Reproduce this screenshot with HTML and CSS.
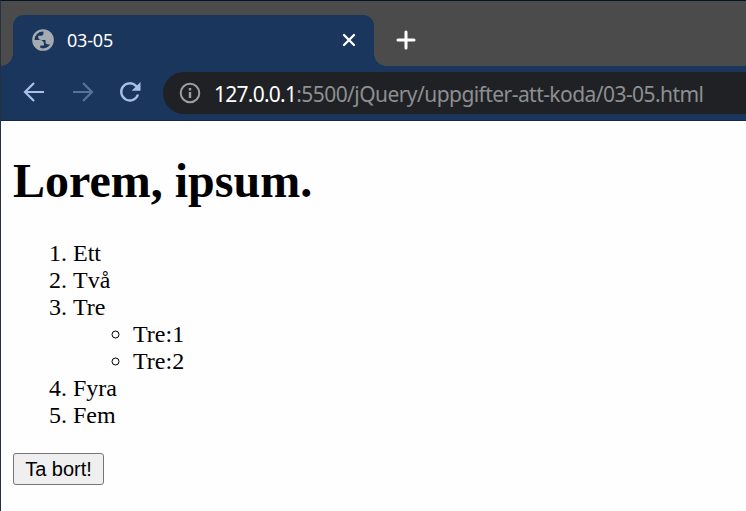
FILE: index.html
```html
<!DOCTYPE html>
<html lang="sv">
<head>
<meta charset="utf-8">
<title>03-05</title>
<link rel="stylesheet" href="styles.css">
</head>
<body>
<div class="window">
  <header class="tabs">
    <div class="tab">
      <svg class="globe" width="26" height="26" viewBox="0 0 24 24"><circle cx="12" cy="12" r="8.900" fill="none" stroke="#a5abb1" stroke-width="2.200"/><path fill="#a5abb1" d="M3.500 12h4.900c3.400.02 4.900 1.730 4.500 5.100H9.500v3C6 18.800 3.500 15.600 3.500 12zm17 0c0 1-.3 2-.9 2.900-.9 1.100-2.200 1.500-3.600 1.100-1.100-.4-1.700-1.200-1.700-2.400V12h-4c-1.800-.1-2.700-1-2.700-2.700V8h2.700c1.400 0 2.100-.7 2.100-2V3.600c4.500-.1 8.100 3.800 8.100 8.400z"/></svg>
      <span class="title">03-05</span>
      <svg class="close" width="14" height="14" viewBox="0 0 14 14"><path d="M2 2l10 10M12 2L2 12" stroke="#fff" stroke-width="2.300" stroke-linecap="round"/></svg>
    </div>
    <svg class="plus" width="20" height="20" viewBox="0 0 20 20"><path d="M10 2v16M2 10h16" stroke="#fff" stroke-width="3" stroke-linecap="round"/></svg>
  </header>
  <nav class="toolbar">
    <svg class="back" width="22" height="22" viewBox="0 0 22 22"><path d="M21 11H2.500M11 2L2 11l9 9" fill="none" stroke="#a9c1e6" stroke-width="2.200"/></svg>
    <svg class="forward" width="22" height="22" viewBox="0 0 22 22"><path d="M1 11h18.500M11 2l9 9-9 9" fill="none" stroke="#56739c" stroke-width="2.200"/></svg>
    <svg class="reload" width="22" height="22" viewBox="0 0 22 22"><path d="M19 13.500A8.600 8.600 0 1 1 17 4.900l2 2" fill="none" stroke="#a9c1e6" stroke-width="2.300"/><path d="M21.500 1v8.800h-8.800z" fill="#a9c1e6"/></svg>
    <div class="address">
      <svg width="22" height="22" viewBox="0 0 22 22"><circle cx="11" cy="11" r="9.300" fill="none" stroke="#9aa0a6" stroke-width="2"/><path d="M9.800 10h2.400v6H9.800zM9.800 6h2.400v2.400H9.800z" fill="#9aa0a6"/></svg>
      <span class="url"><span class="host">127.0.0.1</span>:5500/jQuery/uppgifter-att-koda/03-05.html</span>
    </div>
  </nav>
  <main>
    <h1>Lorem, ipsum.</h1>
    <ol>
      <li>Ett</li>
      <li>Två</li>
      <li>Tre
        <ul>
          <li>Tre:1</li>
          <li>Tre:2</li>
        </ul>
      </li>
      <li>Fyra</li>
      <li>Fem</li>
    </ol>
    <button>Ta bort!</button>
  </main>
</div>
</body>
</html>
```
FILE: styles.css
```css
* { box-sizing: border-box; }
body { margin: 0; background: #fefefe; overflow: hidden; }
svg { display: block; flex: none; }
.window {
  height: 511px;
  border-left: 1px solid #26303f;
  border-top: 1px solid #051527;
}
.tabs {
  display: flex;
  height: 65px;
  padding: 14px 0 0 12px;
  background: #4b4b4b;
}
.tab {
  position: relative;
  display: flex;
  align-items: center;
  width: 361px;
  height: 51px;
  padding: 0 18px 2px 17px;
  border-radius: 11px 11px 0 0;
  background: #1a365d;
}
.tab::before, .tab::after {
  content: "";
  position: absolute;
  bottom: 0;
  width: 12px;
  height: 12px;
}
.tab::before {
  left: -12px;
  background: radial-gradient(circle at 0 0, #4b4b4b 11.500px, #1a365d 12px);
}
.tab::after {
  right: -12px;
  background: radial-gradient(circle at 100% 0, #4b4b4b 11.500px, #1a365d 12px);
}
.title {
  flex: 1;
  margin-left: 11px;
  font: 18px/24px "Noto Sans", sans-serif;
  letter-spacing: -0.200px;
  color: #fff;
}
.plus { margin: 15px 0 0 22px; }
.toolbar {
  display: flex;
  align-items: center;
  height: 55px;
  padding-left: 22px;
  background: #1a365d;
  border-bottom: 1px solid #10294d;
}
.back, .forward, .reload { margin-top: -2px; }
.forward { margin-left: 27px; }
.reload { margin-left: 25px; }
.address {
  display: flex;
  align-items: center;
  flex: 1;
  height: 42px;
  margin-left: 22px;
  padding-left: 16px;
  border-radius: 21px 0 0 21px;
  background: #202124;
}
.url {
  margin-left: 13px;
  padding-top: 1px;
  font: 21px/30px "Noto Sans", sans-serif;
  letter-spacing: -0.560px;
  white-space: nowrap;
  color: #8d8f92;
}
.host { letter-spacing: -0.750px; color: #fff; }
main {
  padding: 32px 12px 0;
  font: 24px/27px "Liberation Serif", serif;
  color: #000;
}
h1 { margin: 0 0 32px; font-size: 48px; line-height: 55px; }
ol { margin: 0 0 24px; padding-left: 60px; }
ul { margin: 0; padding-left: 60px; }
button {
  display: block;
  width: 91px;
  height: 32px;
  padding: 0;
  border: 1px solid #767676;
  border-radius: 3px;
  background: #efefef;
  font: 20px/28px "Liberation Sans", sans-serif;
  color: #000;
}
```
